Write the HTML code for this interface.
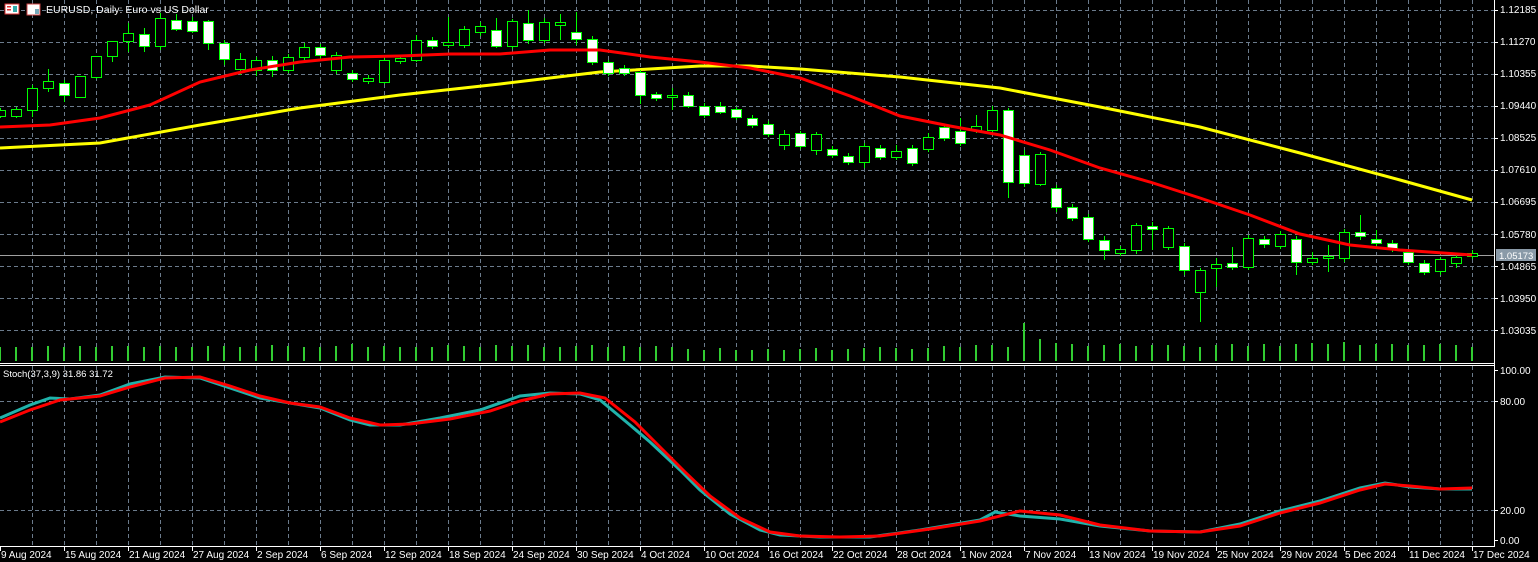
<!DOCTYPE html>
<html><head><meta charset="utf-8"><style>
html,body{margin:0;padding:0;background:#000;width:1538px;height:562px;overflow:hidden}
svg{display:block}
text{font-family:"Liberation Sans","DejaVu Sans",sans-serif;font-size:10px;fill:#fff}
</style></head><body>
<svg id="s" width="1538" height="562" xmlns="http://www.w3.org/2000/svg">
<rect width="1538" height="562" fill="#000"/>
<g id="grid" stroke="#6b7b8c" stroke-dasharray="4,3" stroke-width="1"></g>
<g id="vol" fill="#32cd32"></g>
<line x1="0" y1="255.5" x2="1494" y2="255.5" stroke="#a0a0a0"/>
<polyline fill="none" stroke="#ffff00" stroke-width="3" points="0,148 100,143 200,125 300,108 400,95 500,84 600,72 700,66 750,66 800,69 900,77 1000,88 1100,107 1200,127 1300,153 1400,180 1472,200"/>
<g id="candles"></g>
<polyline fill="none" stroke="#ff0000" stroke-width="3" points="0,127 50,125 100,118 150,105 200,82 250,70 300,62 350,57 400,56 450,54 500,54 550,50 600,50 650,57 700,62 750,68 800,78 850,96 900,116 950,126 1000,135 1050,150 1100,168 1150,182 1200,198 1250,215 1300,234 1350,245 1400,250 1472,255"/>
<polyline fill="none" stroke="#20b2aa" stroke-width="3" points="0,418 30,405 50,398 70,399 100,395 130,384 165,377 200,378 230,388 260,398 290,403 320,408 350,420 370,425 400,425 440,418 480,410 520,396 550,393 580,394 600,400 630,425 650,442 680,470 700,490 730,514 760,530 780,535 820,537 870,537 920,530 980,520 995,512 1020,516 1060,519 1100,526 1150,531 1200,532 1240,524 1280,511 1320,501 1360,488 1385,483 1410,487 1440,489 1472,489"/>
<polyline fill="none" stroke="#ff0000" stroke-width="3" points="0,422 30,410 60,400 100,396 130,387 165,378 200,377 230,386 260,396 290,403 320,407 350,418 380,425 410,424 450,419 490,411 520,401 550,394 580,393 605,398 635,422 660,447 685,472 710,496 740,518 770,532 800,536 840,537 880,536 930,529 980,521 1020,511 1060,515 1100,525 1150,531 1200,532 1240,526 1280,513 1320,503 1360,490 1385,484 1410,486 1440,489 1472,488"/>
<line x1="0" y1="363.5" x2="1494" y2="363.5" stroke="#fff"/>
<line x1="0" y1="365.5" x2="1494" y2="365.5" stroke="#fff"/>
<line x1="1494.5" y1="0" x2="1494.5" y2="547" stroke="#fff"/>
<line x1="0" y1="546.5" x2="1494" y2="546.5" stroke="#fff"/>
<g id="ticks" stroke="#fff"></g>
<rect x="1496" y="249" width="40" height="12" fill="#8a9aa8"/>
<text x="1499" y="259" style="font-size:9.5px">1.05173</text>
<g id="plabels">
<text x="1500" y="13">1.12185</text><text x="1500" y="45">1.11270</text><text x="1500" y="77">1.10355</text><text x="1500" y="109">1.09440</text><text x="1500" y="141">1.08525</text><text x="1500" y="173">1.07610</text><text x="1500" y="205">1.06695</text><text x="1500" y="238">1.05780</text><text x="1500" y="270">1.04865</text><text x="1500" y="302">1.03950</text><text x="1500" y="334">1.03035</text>
<text x="1500" y="374">100.00</text><text x="1500" y="405">80.00</text><text x="1500" y="514">20.00</text><text x="1500" y="544">0.00</text>
</g>
<g id="dlabels">
<text x="1" y="558">9 Aug 2024</text><text x="65" y="558">15 Aug 2024</text><text x="129" y="558">21 Aug 2024</text><text x="193" y="558">27 Aug 2024</text><text x="257" y="558">2 Sep 2024</text><text x="321" y="558">6 Sep 2024</text><text x="385" y="558">12 Sep 2024</text><text x="449" y="558">18 Sep 2024</text><text x="513" y="558">24 Sep 2024</text><text x="577" y="558">30 Sep 2024</text><text x="641" y="558">4 Oct 2024</text><text x="705" y="558">10 Oct 2024</text><text x="769" y="558">16 Oct 2024</text><text x="833" y="558">22 Oct 2024</text><text x="897" y="558">28 Oct 2024</text><text x="961" y="558">1 Nov 2024</text><text x="1025" y="558">7 Nov 2024</text><text x="1089" y="558">13 Nov 2024</text><text x="1153" y="558">19 Nov 2024</text><text x="1217" y="558">25 Nov 2024</text><text x="1281" y="558">29 Nov 2024</text><text x="1345" y="558">5 Dec 2024</text><text x="1409" y="558">11 Dec 2024</text><text x="1473" y="558">17 Dec 2024</text>
</g>
<text x="3" y="377" style="font-size:9.5px">Stoch(37,3,9) 31.86 31.72</text>
<rect x="5" y="4" width="14" height="10" fill="#fff" stroke="#d33" stroke-width="1"/>
<rect x="7" y="6" width="4" height="1.5" fill="#d33"/><rect x="7" y="9" width="4" height="1.5" fill="#d33"/><rect x="13" y="6" width="4" height="6" fill="#3aa"/>
<rect x="27" y="4" width="13" height="11" fill="#fff" stroke="#c44" stroke-width="1"/>
<rect x="35" y="9" width="4" height="5" fill="#7ab"/>
<text x="46" y="13" style="font-size:10.5px">EURUSD, Daily:  Euro vs US Dollar</text>
</svg>
<script>
var ns="http://www.w3.org/2000/svg";
function el(p,t,a){var e=document.createElementNS(ns,t);for(var k in a)e.setAttribute(k,a[k]);document.getElementById(p).appendChild(e);}
// grid
for(var x=32;x<1494;x+=32){el("grid","line",{x1:x+.5,y1:0,x2:x+.5,y2:363});el("grid","line",{x1:x+.5,y1:366,x2:x+.5,y2:546});}
[10,42,74,106,138,170,202,234,266,298,330,401,510].forEach(function(y){el("grid","line",{x1:0,y1:y+.5,x2:1494,y2:y+.5});});
[10,42,74,106,138,170,202,234,266,298,330,370,401,510,540].forEach(function(y){el("ticks","line",{x1:1494,y1:y+.5,x2:1498,y2:y+.5});});
for(var x=0;x<=1472;x+=64){el("ticks","line",{x1:x+.5,y1:546,x2:x+.5,y2:551});}
// candles: [x, bodyTop, bodyBot, wickTop, wickBot, bear]
var c=[[0,110,116,108,118,0],[16,109,116,107,118,0],[32,88,110,85,117,0],[48,81,88,69,92,0],[64,83,95,80,102,1],[80,76,97,76,98,0],[96,56,77,56,79,0],[112,41,56,41,62,0],[128,33,41,23,52,0],[144,34,46,28,52,1],[160,18,46,13,50,0],[176,20,29,14,31,1],[192,21,31,17,33,1],[208,21,43,20,50,1],[224,43,59,40,65,1],[240,59,69,53,75,0],[256,60,70,57,76,0],[272,60,70,56,77,1],[288,57,70,54,73,0],[304,47,57,43,60,0],[320,47,55,44,59,1],[336,55,70,52,74,0],[352,73,79,70,82,1],[368,78,81,75,84,0],[384,60,82,58,84,0],[400,58,61,55,64,0],[416,40,60,35,62,0],[432,40,46,37,49,1],[448,42,45,17,48,0],[464,29,45,26,48,0],[480,26,32,22,36,0],[496,30,46,18,48,1],[512,21,46,19,49,0],[528,23,40,10,44,1],[544,22,40,18,43,0],[560,22,25,14,40,0],[576,32,39,12,45,1],[592,39,62,36,65,1],[608,62,73,60,76,1],[624,68,73,65,76,1],[640,72,95,70,104,1],[656,94,98,92,101,1],[672,95,97,88,110,0],[688,95,106,92,108,1],[704,106,115,103,118,1],[720,106,112,102,114,1],[736,109,117,107,120,1],[752,118,125,115,128,1],[768,124,134,121,137,1],[784,134,145,130,150,0],[800,133,146,131,149,1],[816,134,150,132,155,0],[832,149,155,146,158,1],[848,156,162,153,165,1],[864,146,162,143,168,0],[880,148,157,145,160,1],[896,151,157,145,160,0],[912,148,163,145,166,1],[928,137,149,133,152,0],[944,127,138,124,141,1],[960,131,143,118,146,1],[976,126,130,115,133,0],[992,110,130,106,133,0],[1008,110,182,108,198,1],[1024,155,183,150,187,1],[1040,154,184,152,186,0],[1056,188,207,185,212,1],[1072,207,218,204,221,1],[1088,217,239,214,242,1],[1104,240,250,236,260,1],[1120,249,253,246,256,0],[1136,225,250,223,254,0],[1152,226,229,222,250,1],[1168,228,247,226,250,0],[1184,246,270,243,275,1],[1200,270,292,268,322,0],[1216,264,268,258,287,0],[1232,263,267,247,270,1],[1248,238,267,235,270,0],[1264,239,244,236,248,1],[1280,234,246,231,249,0],[1296,239,262,236,275,1],[1312,258,262,252,265,0],[1328,256,258,245,272,0],[1344,232,258,229,262,0],[1360,232,236,215,240,1],[1376,239,243,230,246,1],[1392,243,248,240,252,1],[1408,252,262,249,265,1],[1424,263,272,260,275,1],[1440,259,271,257,275,0],[1456,257,263,254,268,0],[1472,253,256,250,259,0]];
var vh=[14,14,14,15,14,15,14,15,15,14,15,14,14,15,15,14,15,16,15,14,14,15,17,14,15,14,14,14,16,15,14,16,15,16,14,14,15,16,14,15,14,15,14,12,11,13,11,11,12,11,12,13,11,12,13,14,13,12,13,15,14,16,16,14,38,22,18,17,15,16,17,15,16,16,15,14,16,17,15,17,15,17,18,17,19,16,17,17,16,16,17,16,14,2];
c.forEach(function(d,i){var x=d[0];
 el("vol","rect",{x:x-1,y:361-(vh[i]||14),width:2,height:(vh[i]||14)});
 el("candles","line",{x1:x+.5,y1:d[3],x2:x+.5,y2:d[4],stroke:"#00ff00"});
 el("candles","rect",{x:x-4.5,y:d[1]+.5,width:10,height:Math.max(1,d[2]-d[1]),fill:d[5]?"#fff":"#000",stroke:"#00ff00","stroke-width":1});
});
</script>
</body></html>
